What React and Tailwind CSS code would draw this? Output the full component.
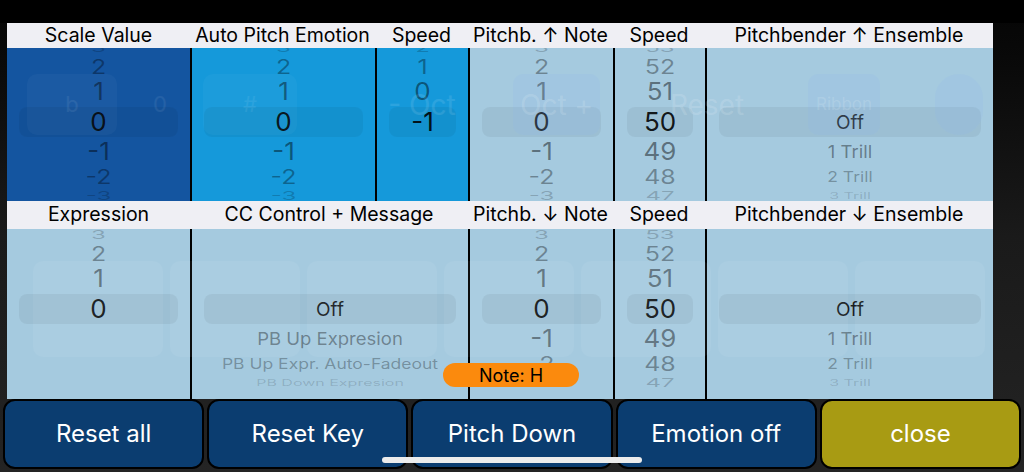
import React from "react";

const SLOT_H = ["h-[18px]", "h-[20px]", "h-[30px]", "h-[30px]", "h-[30px]", "h-[20px]", "h-[18px]"];

const NUM_STYLE = [
  "text-[24px] scale-y-[0.5] text-black/20",
  "text-[25px] scale-y-[0.78] text-black/35",
  "text-[26px] scale-y-[0.92] text-black/45",
  "text-[26px] text-black/90",
  "text-[26px] scale-y-[0.92] text-black/45",
  "text-[25px] scale-y-[0.78] text-black/35",
  "text-[24px] scale-y-[0.5] text-black/20",
];

const TEXT_STYLE = [
  "text-[16px] scale-y-[0.55] text-black/15",
  "text-[17.5px] scale-y-[0.8] text-black/30",
  "text-[18.5px] scale-y-[0.92] text-black/40",
  "text-[19px] text-black/85",
  "text-[18.5px] scale-y-[0.92] text-black/40",
  "text-[17.5px] scale-y-[0.8] text-black/30",
  "text-[16px] scale-y-[0.55] text-black/15",
];

const Wheel = ({ items, words, shift }) => {
  const styles = words ? TEXT_STYLE : NUM_STYLE;
  return (
    <div className={`relative z-10 flex h-full flex-col justify-center overflow-hidden ${shift}`}>
      {items.map((item, i) => (
        <div
          key={i}
          className={`${SLOT_H[i]} flex shrink-0 items-center justify-center leading-none ${
            i === 3 ? "mx-3 rounded-[8px] bg-black/[0.05]" : ""
          }`}
        >
          {item !== null && <span className={`block whitespace-nowrap ${styles[i]}`}>{item}</span>}
        </div>
      ))}
    </div>
  );
};

const row1 = [
  { title: "Scale Value", w: "w-[183px]", bg: "bg-[#1455a0]", items: ["3", "2", "1", "0", "-1", "-2", "-3"] },
  { title: "Auto Pitch Emotion", w: "w-[185px]", bg: "bg-[#1599da]", items: ["3", "2", "1", "0", "-1", "-2", "-3"] },
  { title: "Speed", w: "w-[93px]", bg: "bg-[#1599da]", items: ["2", "1", "0", "-1", null, null, null] },
  { title: "Pitchb. ↑ Note", w: "w-[145px]", bg: "bg-[#a5cadf]", items: ["3", "2", "1", "0", "-1", "-2", "-3"] },
  { title: "Speed", w: "w-[92px]", bg: "bg-[#a5cadf]", items: ["53", "52", "51", "50", "49", "48", "47"] },
  { title: "Pitchbender ↑ Ensemble", w: "w-[288px]", bg: "bg-[#a5cadf]", words: true, items: [null, null, null, "Off", "1 Trill", "2 Trill", "3 Trill"] },
];

const row2 = [
  { title: "Expression", w: "w-[183px]", items: ["3", "2", "1", "0", null, null, null] },
  { title: "CC Control + Message", w: "w-[278px]", words: true, items: [null, null, null, "Off", "PB Up Expresion", "PB Up Expr. Auto-Fadeout", "PB Down Expresion"] },
  { title: "Pitchb. ↓ Note", w: "w-[145px]", items: ["3", "2", "1", "0", "-1", "-2", "-3"] },
  { title: "Speed", w: "w-[92px]", items: ["53", "52", "51", "50", "49", "48", "47"] },
  { title: "Pitchbender ↓ Ensemble", w: "w-[288px]", words: true, items: [null, null, null, "Off", "1 Trill", "2 Trill", "3 Trill"] },
];

// faint controls of the keyboard screen showing through the overlay
const ghosts1 = [
  { w: "w-[20px]" },
  { w: "w-[90px]", box: "bg-white/[0.03]", label: "b", text: "text-[22px] text-white/[0.07]" },
  { w: "w-[86px]", label: "0", text: "text-[22px] text-white/[0.07]" },
  { w: "w-[94px]", box: "bg-white/[0.03]", label: "#", text: "text-[22px] text-white/[0.07]" },
  { w: "w-[87px]" },
  { w: "w-[76px]", label: "- Oct", text: "text-[28px] text-white/10" },
  { w: "w-[53px]" },
  { w: "w-[87px]", box: "bg-[#8fb9ec]/20", label: "Oct +", text: "text-[28px] text-white/15" },
  { w: "w-[59px]" },
  { w: "w-[96px]", label: "Reset", text: "text-[28px] text-white/15" },
  { w: "w-[53px]" },
  { w: "w-[72px]", box: "bg-[#8fb9ec]/20", label: "Ribbon", text: "text-[17px] text-white/15" },
  { w: "w-[55px]" },
  { w: "w-[48px]", box: "bg-[#8fb9ec]/20 rounded-full" },
];

const Header = ({ cols, h }) => (
  <div className={`flex ${h} items-center bg-[#efeff4] text-[19.5px] text-black`}>
    {cols.map((c, i) => (
      <div key={i} className={`${c.w} shrink-0 text-center whitespace-nowrap`}>
        {c.title}
      </div>
    ))}
  </div>
);

const buttons = [
  { label: "Reset all", bg: "bg-[#0b3d70]" },
  { label: "Reset Key", bg: "bg-[#0b3d70]" },
  { label: "Pitch Down", bg: "bg-[#0b3d70]" },
  { label: "Emotion off", bg: "bg-[#0b3d70]" },
  { label: "close", bg: "bg-[#a89b13]" },
];

export default function App() {
  return (
    <div className="relative h-[472px] w-[1024px] overflow-hidden bg-gradient-to-b from-[#050505] via-[#1a1a1a] to-[#242424] font-['Inter',sans-serif]">
      <div className="h-[23px] bg-black" />

      <div className="ml-[7px] w-[986px]">
        <Header cols={row1} h="h-[25px]" />
        <div className="relative flex h-[153px]">
          {row1.map((c, i) => (
            <div key={i} className={`${c.w} ${c.bg} shrink-0 ${i > 0 ? "border-l-2 border-black" : ""}`}>
              <Wheel items={c.items} words={c.words} shift="pb-[5px]" />
            </div>
          ))}
          <div className="pointer-events-none absolute inset-x-0 top-[26px] z-20 flex h-[61px]">
            {ghosts1.map((g, i) => (
              <div
                key={i}
                className={`${g.w} flex shrink-0 items-center justify-center rounded-[10px] ${g.box || ""} ${g.text || ""}`}
              >
                {g.label}
              </div>
            ))}
          </div>
        </div>

        <Header cols={row2} h="h-[28px]" />
        <div className="relative flex h-[170px] bg-[#a5cadf]">
          {row2.map((c, i) => (
            <div key={i} className={`${c.w} shrink-0 ${i > 0 ? "border-l-2 border-black" : ""}`}>
              <Wheel items={c.items} words={c.words} shift="pb-[10px]" />
            </div>
          ))}
          <div className="pointer-events-none absolute inset-x-0 top-[32px] z-20 flex gap-[7px] pl-[26px]">
            {[0, 1, 2, 3, 4, 5, 6].map((i) => (
              <div key={i} className="h-[96px] w-[130px] shrink-0 rounded-[10px] bg-white/[0.05]" />
            ))}
          </div>
        </div>
      </div>

      <div className="flex h-[72px] gap-[3px] px-[3px] pb-[2px]">
        {buttons.map((b) => (
          <button
            key={b.label}
            className={`${b.bg} flex flex-1 items-center justify-center rounded-[12px] border-2 border-black text-[24px] text-white`}
          >
            {b.label}
          </button>
        ))}
      </div>

      <div className="absolute left-[443px] top-[363px] z-30 flex h-[24px] w-[136px] items-center justify-center rounded-full bg-[#fb8a0d] text-[18px] text-black">
        Note: H
      </div>

      <div className="absolute left-[382px] top-[457px] z-30 h-[6px] w-[260px] rounded-full bg-[#ececec]" />
    </div>
  );
}
